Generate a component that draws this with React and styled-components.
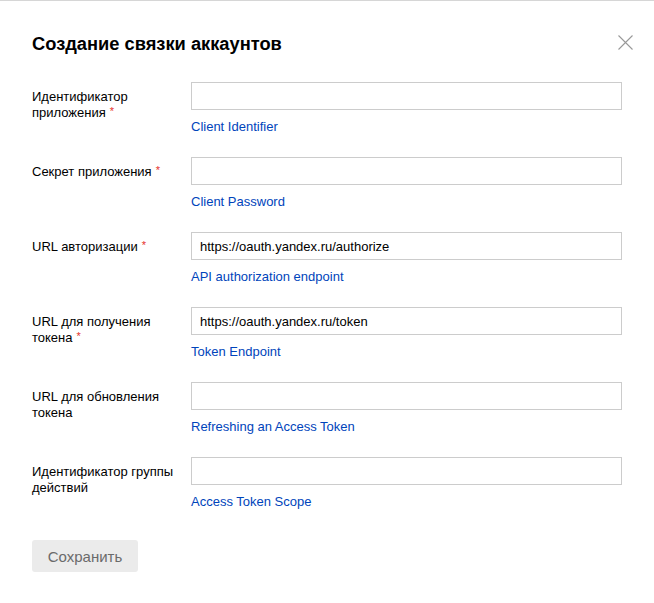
import React from 'react'
import styled, { createGlobalStyle } from 'styled-components'

const GlobalStyle = createGlobalStyle`
  html, body {
    margin: 0;
    padding: 0;
    background: #ffffff;
  }
  body {
    font-family: "Liberation Sans", Arial, sans-serif;
    color: #000;
  }
`

const Modal = styled.div`
  width: 654px;
  height: 603px;
  box-sizing: border-box;
  border-top: 1px solid #d6d6d6;
  background: #fff;
  padding: 30px 32px 0 32px;
`

const Header = styled.div`
  display: flex;
  align-items: center;
  justify-content: space-between;
  height: 26px;
`

const Title = styled.h2`
  margin: 0;
  font-size: 18.3px;
  font-weight: 700;
  line-height: 26px;
`

const Close = styled.button`
  border: 0;
  background: none;
  padding: 0;
  width: 15px;
  height: 15px;
  margin-right: -11px;
  margin-top: -4px;
  cursor: pointer;
  svg {
    display: block;
  }
`

const Form = styled.div`
  margin-top: 25px;
  display: flex;
  flex-direction: column;
  gap: 22px;
`

const Row = styled.div`
  display: grid;
  grid-template-columns: 159px 431px;
  align-items: start;
`

const Label = styled.div`
  padding-top: 7px;
  font-size: 13px;
  line-height: 16px;
  padding-right: 2px;
`

const Required = styled.span`
  color: #e5302b;
  margin-left: 4px;
  font-size: 11px;
  line-height: 0;
  position: relative;
  top: -2px;
`

const Field = styled.div`
  display: flex;
  flex-direction: column;
`

const Input = styled.input`
  box-sizing: border-box;
  height: 28px;
  width: 100%;
  border: 1px solid #ccc;
  border-radius: 0;
  padding: 0 8px;
  font-family: "Liberation Sans", Arial, sans-serif;
  font-size: 13px;
  color: #000;
  outline: none;
`

const Hint = styled.a`
  margin-top: 9px;
  font-size: 13px;
  line-height: 16px;
  color: #04b;
  text-decoration: none;
  align-self: flex-start;
`

const Save = styled.button`
  margin-top: 30px;
  width: 106px;
  height: 32px;
  border: 0;
  border-radius: 3px;
  background: #ebebeb;
  color: #6a6a6a;
  font-family: "Liberation Sans", Arial, sans-serif;
  font-size: 15px;
`

const fields = [
  { label: 'Идентификатор приложения', required: true, hint: 'Client Identifier', value: '' },
  { label: 'Секрет приложения', required: true, hint: 'Client Password', value: '' },
  { label: 'URL авторизации', required: true, hint: 'API authorization endpoint', value: 'https://oauth.yandex.ru/authorize' },
  { label: 'URL для получения токена', required: true, hint: 'Token Endpoint', value: 'https://oauth.yandex.ru/token' },
  { label: 'URL для обновления токена', required: false, hint: 'Refreshing an Access Token', value: '' },
  { label: 'Идентификатор группы действий', required: false, hint: 'Access Token Scope', value: '' },
]

export default function App() {
  return (
    <>
      <GlobalStyle />
      <Modal>
        <Header>
          <Title>Создание связки аккаунтов</Title>
          <Close aria-label="Закрыть">
            <svg width="15" height="15" viewBox="0 0 15 15">
              <path d="M0.5 0.5 L14.5 14.5 M14.5 0.5 L0.5 14.5" stroke="#999" strokeWidth="1.1" fill="none" />
            </svg>
          </Close>
        </Header>
        <Form>
          {fields.map((f, i) => (
            <Row key={i}>
              <Label>
                {f.label}
                {f.required && <Required>*</Required>}
              </Label>
              <Field>
                <Input defaultValue={f.value} />
                <Hint href="#">{f.hint}</Hint>
              </Field>
            </Row>
          ))}
        </Form>
        <Save>Сохранить</Save>
      </Modal>
    </>
  )
}
